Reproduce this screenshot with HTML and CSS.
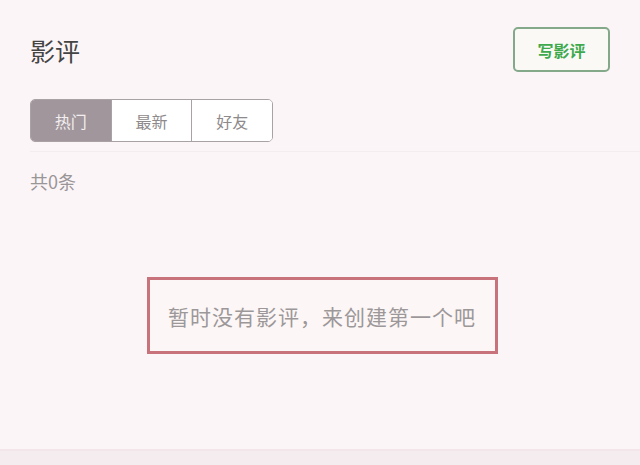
FILE: index.html
```html
<!DOCTYPE html>
<html lang="zh-CN">
<head>
    <meta charset="UTF-8">
    <meta name="viewport" content="width=device-width, initial-scale=1.0">
    <title>影评</title>
    <link rel="stylesheet" href="styles.css">
</head>
<body>
    <div class="pagina">
        <div class="topo">
            <h1 class="titulo">影评</h1>
            <button class="escrever">写影评</button>
        </div>

        <div class="abas">
            <span class="aba ativa">热门</span>
            <span class="aba">最新</span>
            <span class="aba">好友</span>
        </div>

        <div class="divisor"></div>

        <p class="contagem">共0条</p>

        <div class="vazio">
            <p class="aviso">暂时没有影评，来创建第一个吧</p>
        </div>
    </div>
    <div class="rodape"></div>
</body>
</html>
```

FILE: styles.css
```css
body {
    margin: 0;
    font-family: "Noto Sans CJK SC", "Noto Sans", sans-serif;
    background-color: #fcf5f7;
    height: 465px;
    display: flex;
    flex-direction: column;
}

.pagina {
    flex: 1;
    padding: 27px 0 0 30px;
}

.topo {
    display: flex;
    justify-content: space-between;
    align-items: center;
    padding-right: 30px;
}

.titulo {
    margin: 0;
    font-size: 25px;
    font-weight: normal;
    color: #444;
}

.escrever {
    width: 97px;
    height: 45px;
    border: 2px solid #84a88a;
    border-radius: 5px;
    background-color: #fbf9f6;
    color: #3fa94e;
    font-family: inherit;
    font-size: 16px;
    font-weight: bold;
}

.abas {
    display: flex;
    width: 243px;
    height: 43px;
    margin-top: 27px;
    border: 1px solid #a9a2a5;
    border-radius: 5px;
    overflow: hidden;
    box-sizing: border-box;
}

.aba {
    flex: 1;
    display: flex;
    align-items: center;
    justify-content: center;
    background-color: #fff;
    color: #8e8a8c;
    font-size: 16px;
    border-left: 1px solid #a9a2a5;
}

.aba.ativa {
    background-color: #a0969b;
    color: #f3eef0;
    border-left: none;
}

.divisor {
    height: 1px;
    margin-top: 9px;
    background-color: #f4eced;
}

.contagem {
    margin: 16px 0 0 0;
    font-size: 18px;
    color: #9a9597;
}

.vazio {
    display: flex;
    justify-content: center;
    margin-top: 83px;
    padding-right: 30px;
}

.aviso {
    margin: 0 0 0 4px;
    width: 351px;
    height: 77px;
    box-sizing: border-box;
    border: 3px solid #c8727c;
    display: flex;
    align-items: center;
    justify-content: center;
    font-size: 21px;
    letter-spacing: 1px;
    color: #9c9899;
    background-color: #fcf6f6;
}

.rodape {
    height: 14px;
    border-top: 2px solid #f3e6ea;
    background-color: #f5ecef;
}
```
